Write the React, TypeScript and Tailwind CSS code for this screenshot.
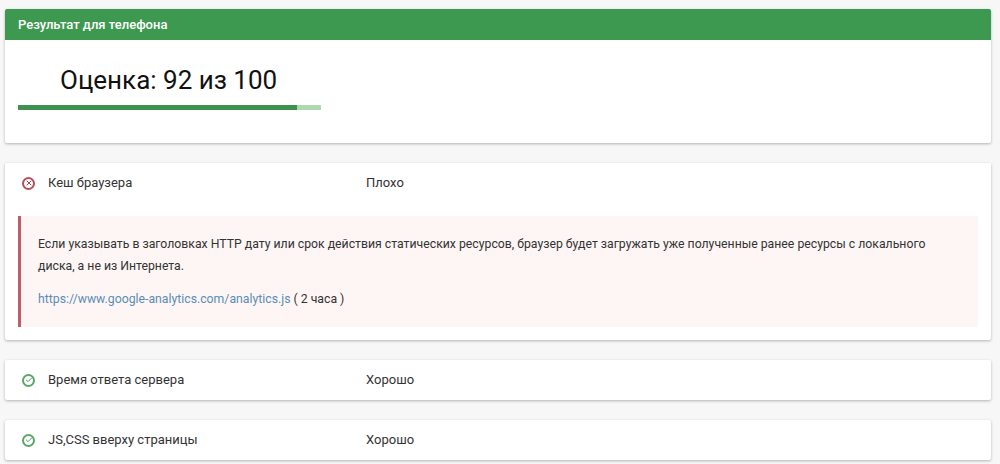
import { Check, X } from 'lucide-react'

const cardClass = 'bg-white rounded-[2px] shadow-[0_1px_3px_rgba(0,0,0,0.28)]'

const StatusIcon = ({ good }: { good: boolean }) => (
  <div
    className={`w-[13px] h-[13px] rounded-full border-2 flex items-center justify-center ${
      good ? 'border-[#5aa767] text-[#4f9f5c]' : 'border-[#b5505a] text-[#b5404c]'
    }`}
  >
    {good ? <Check size={8} strokeWidth={3} /> : <X size={8} strokeWidth={3} />}
  </div>
)

const Row = ({ good, name, value }: { good: boolean; name: string; value: string }) => (
  <div className="flex items-center h-10 pl-[17px]">
    <div className="w-[26px]">
      <StatusIcon good={good} />
    </div>
    <div className="w-[318px] text-[13px] text-[#333]">{name}</div>
    <div className="text-[13px] text-[#333]">{value}</div>
  </div>
)

export default function App() {
  return (
    <div className="w-[1000px] h-[464px] overflow-hidden bg-[#f7f7f7] pt-[9px] pl-[5px] font-['Roboto','Noto_Sans',sans-serif]">
      <div className="w-[986px] flex flex-col gap-5">
        <div className={`${cardClass} h-[134px]`}>
          <div className="h-[31px] bg-[#3d994f] text-white text-[13px] font-medium flex items-center pl-[13px] rounded-t-[2px]">
            Результат для телефона
          </div>
          <div className="pl-[13px] pt-[23px]">
            <div className="pl-[42px] text-[26px] leading-[34px] text-[#111]">Оценка: 92 из 100</div>
            <div className="mt-[8px] w-[303px] h-[5px] bg-[#aed8b2]">
              <div className="w-[279px] h-full bg-[#3f9150]" />
            </div>
          </div>
        </div>

        <div className={`${cardClass} h-[177px]`}>
          <Row good={false} name="Кеш браузера" value="Плохо" />
          <div className="ml-[13px] mt-[13px] w-[960px] h-[111px] bg-[#fdf6f5] border-l-[3px] border-[#b9606a] pl-[17px] pr-[17px] pt-[17px] text-[12.25px] text-[#333]">
            <p className="leading-[22px]">
              Если указывать в заголовках HTTP дату или срок действия статических ресурсов, браузер будет загружать уже полученные ранее ресурсы с локального диска, а не из Интернета.
            </p>
            <p className="mt-[11px] leading-[22px]">
              <a className="text-[#5b8db5]">https://www.google-analytics.com/analytics.js</a> ( 2 часа )
            </p>
          </div>
        </div>

        <div className={cardClass}>
          <Row good name="Время ответа сервера" value="Хорошо" />
        </div>

        <div className={cardClass}>
          <Row good name="JS,CSS вверху страницы" value="Хорошо" />
        </div>
      </div>
    </div>
  )
}
